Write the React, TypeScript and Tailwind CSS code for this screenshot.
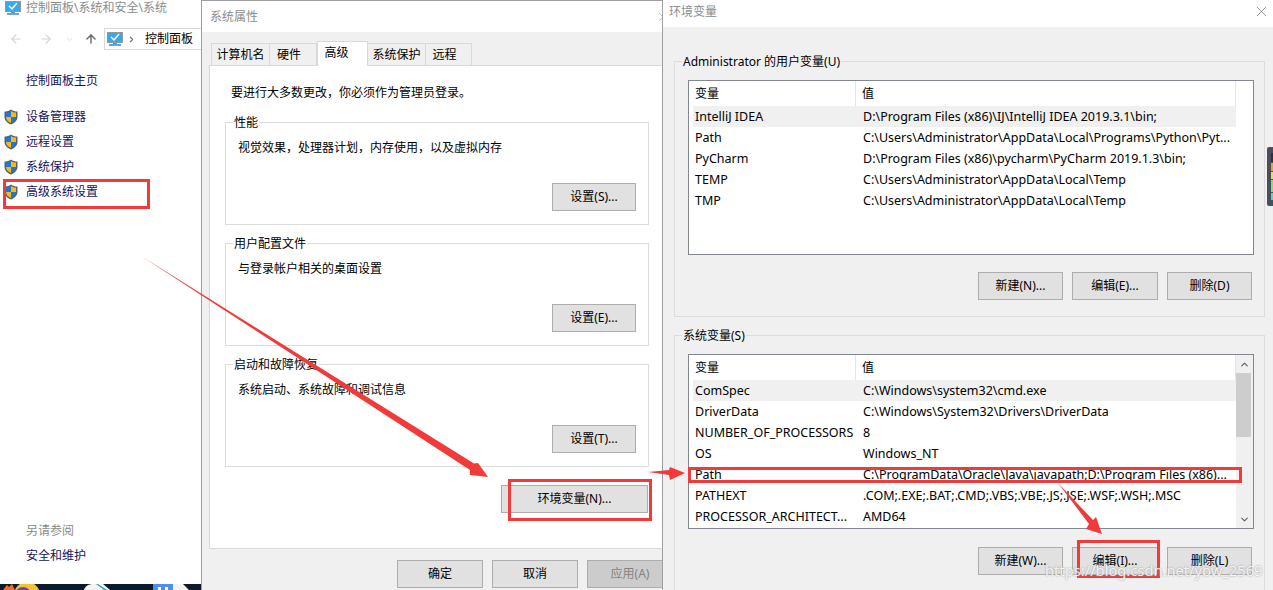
import React from 'react';
import { ArrowLeft, ArrowRight, ArrowUp, ChevronDown, ChevronRight, ChevronUp, X } from 'lucide-react';

const uiFont = 'font-["Noto_Sans","Noto_Sans_CJK_SC",sans-serif]';

type EnvRow = { name: string; value: string };

const userVars: EnvRow[] = [
  { name: 'IntelliJ IDEA', value: 'D:\\Program Files (x86)\\IJ\\IntelliJ IDEA 2019.3.1\\bin;' },
  { name: 'Path', value: 'C:\\Users\\Administrator\\AppData\\Local\\Programs\\Python\\Pyt...' },
  { name: 'PyCharm', value: 'D:\\Program Files (x86)\\pycharm\\PyCharm 2019.1.3\\bin;' },
  { name: 'TEMP', value: 'C:\\Users\\Administrator\\AppData\\Local\\Temp' },
  { name: 'TMP', value: 'C:\\Users\\Administrator\\AppData\\Local\\Temp' },
];

const systemVars: EnvRow[] = [
  { name: 'ComSpec', value: 'C:\\Windows\\system32\\cmd.exe' },
  { name: 'DriverData', value: 'C:\\Windows\\System32\\Drivers\\DriverData' },
  { name: 'NUMBER_OF_PROCESSORS', value: '8' },
  { name: 'OS', value: 'Windows_NT' },
  { name: 'Path', value: 'C:\\ProgramData\\Oracle\\Java\\javapath;D:\\Program Files (x86)...' },
  { name: 'PATHEXT', value: '.COM;.EXE;.BAT;.CMD;.VBS;.VBE;.JS;.JSE;.WSF;.WSH;.MSC' },
  { name: 'PROCESSOR_ARCHITECT...', value: 'AMD64' },
];

const navLinks = ['设备管理器', '远程设置', '系统保护', '高级系统设置'];

const MonitorIcon: React.FC = () => (
  <svg width="16" height="14" viewBox="0 0 16 14" className="shrink-0">
    <rect x="0.5" y="0.5" width="15" height="10" fill="#3aa7e8" stroke="#8a9aa8" />
    <path d="M4 5l3 3 5-6" fill="none" stroke="#ffffff" strokeWidth="1.5" />
    <rect x="6" y="11" width="4" height="1" fill="#7b8a96" />
    <rect x="2" y="12" width="12" height="2" fill="#5fa8d8" />
  </svg>
);

const ShieldIcon: React.FC = () => (
  <svg width="14" height="16" viewBox="0 0 14 16" className="shrink-0">
    <path d="M7 0.5C5 2 3 2.6 0.5 2.6V8c0 3.6 3 6 6.5 7.5 3.5-1.5 6.5-3.9 6.5-7.5V2.6C11 2.6 9 2 7 0.5z" fill="#5a6068" />
    <path d="M7 2v6H2V3.6C3.8 3.5 5.5 3 7 2z" fill="#1f78d1" />
    <path d="M7 2c1.5 1 3.2 1.5 5 1.6V8H7z" fill="#f6b91c" />
    <path d="M2 8h5v6C4.400 12.800 2 11 2 8z" fill="#f6b91c" />
    <path d="M7 8h5c0 3-2.400 4.800-5 6z" fill="#1f78d1" />
  </svg>
);

const TaskbarIcons: React.FC = () => (
  <svg width="201" height="6" viewBox="0 0 201 6" className="block">
    <path d="M3 6L7 1l2 2 3-3 3 6z" fill="#f0701c" />
    <circle cx="27" cy="11" r="13" fill="#f4c430" />
    <circle cx="23" cy="11" r="8" fill="#7b3fb5" />
    <path d="M84 6c1-4 5-6 9-6h10l7 6z" fill="#f4f4f4" />
    <path d="M98 0l9 6h-3l-8-6z" fill="#2fa89a" />
    <rect x="153" y="0" width="20" height="6" fill="#4d8ef0" />
    <rect x="158" y="3" width="3" height="3" fill="#ffffff" />
    <rect x="165" y="3" width="3" height="3" fill="#ffffff" />
    <path d="M173 0h10l6 6h-16z" fill="#f2f2f2" />
  </svg>
);

const WinButton: React.FC<{ label: string; className: string; disabled?: boolean }> = ({ label, className, disabled }) => (
  <div
    className={`flex h-[28px] items-center justify-center border border-[#adadad] ${
      disabled ? 'bg-[#cccccc] text-[#838383]' : 'bg-[#e1e1e1] text-black'
    } ${className}`}
  >
    {label}
  </div>
);

const SettingsGroup: React.FC<{ title: string; desc: string; action: string }> = ({ title, desc, action }) => (
  <div className="relative h-[103px] w-[424px] border border-[#dcdcdc]">
    <span className="absolute left-[7px] top-[-8px] bg-white px-px leading-[16px]">{title}</span>
    <p className="pl-[12px] pt-[17px] leading-[16px]">{desc}</p>
    <WinButton label={action} className="absolute left-[326px] top-[60px] w-[84px]" />
  </div>
);

const EnvList: React.FC<{ rows: EnvRow[]; hovered: number; scrollbar?: boolean }> = ({ rows, hovered, scrollbar }) => (
  <div className="ml-[13px] mt-[18px] flex h-[175px] w-[566px] overflow-hidden border border-[#828790] bg-white">
    <div className="ml-[4px] w-[543px] shrink-0">
      <div className="flex h-[25px] items-center border-r border-[#e5e5e5]">
        <span className="w-[163px] border-r border-[#e5e5e5] pl-[2px] leading-[25px]">变量</span>
        <span className="pl-[6px]">值</span>
      </div>
      {rows.map((row, idx) => (
        <div key={row.name + idx} className={`flex h-[21px] items-center pt-[2px] text-[12.5px] ${idx === hovered ? 'bg-[#f0f0f0]' : ''}`}>
          <span className="w-[170px] shrink-0 whitespace-nowrap pl-[2px]">{row.name}</span>
          <span className="whitespace-nowrap">{row.value}</span>
        </div>
      ))}
    </div>
    {scrollbar && (
      <div className="flex w-[17px] flex-col bg-[#f0f0f0]">
        <div className="flex h-[18px] items-center justify-center">
          <ChevronUp size={11} strokeWidth={2.5} color="#606060" />
        </div>
        <div className="h-[64px] w-[15px] bg-[#cdcdcd]" />
        <div className="mt-auto flex h-[18px] items-center justify-center">
          <ChevronDown size={11} strokeWidth={2.5} color="#606060" />
        </div>
      </div>
    )}
  </div>
);

const EnvActions: React.FC<{ labels: string[]; className: string }> = ({ labels, className }) => (
  <div className={`flex justify-end gap-[9px] pr-[12px] ${className}`}>
    <WinButton label={labels[0]} className="w-[85px]" />
    <WinButton label={labels[1]} className="w-[86px]" />
    <WinButton label={labels[2]} className="w-[85px]" />
  </div>
);

const App: React.FC = () => {
  return (
    <div className={`relative flex h-[590px] w-[1273px] overflow-hidden bg-white text-[12px] text-black ${uiFont}`}>
      {/* control panel */}
      <aside className="flex h-full w-[201px] shrink-0 flex-col overflow-hidden text-[#14145a]">
        <div className="flex h-[16px] items-center gap-[5px] pl-[5px] text-[#8c8c8c]">
          <MonitorIcon />
          <span className="whitespace-nowrap">控制面板\系统和安全\系统</span>
        </div>
        <div className="mt-[12px] flex h-[22px] items-center">
          <ArrowLeft size={14} color="#d4d4d4" className="ml-[9px]" />
          <ArrowRight size={14} color="#d4d4d4" className="ml-[16px]" />
          <ChevronDown size={9} color="#d4d4d4" className="ml-[12px]" />
          <ArrowUp size={14} strokeWidth={2.5} color="#6b6b6b" className="ml-[10px]" />
          <div className="ml-[6px] flex h-[22px] flex-1 items-center border border-r-0 border-[#d9d9d9] pl-[2px] text-black">
            <MonitorIcon />
            <ChevronRight size={9} strokeWidth={3} color="#707070" className="ml-[4px]" />
            <span className="ml-[9px] whitespace-nowrap">控制面板</span>
          </div>
        </div>
        <div className="mt-[21px] h-[20px] pl-[26px] leading-[20px]">控制面板主页</div>
        <ul className="mt-[13px]">
          {navLinks.map((link) => (
            <li key={link} className="flex h-[25px] items-center gap-[8px] pl-[4px]">
              <ShieldIcon />
              {link}
            </li>
          ))}
        </ul>
        <div className="mt-auto h-[25px] pl-[26px] leading-[25px] text-[#8a8a8a]">另请参阅</div>
        <div className="h-[25px] pl-[26px] leading-[25px]">安全和维护</div>
        <div className="mt-[16px] h-[6px] bg-[#0c1a2e]">
          <TaskbarIcons />
        </div>
      </aside>

      {/* system properties */}
      <section className="flex h-full w-[461px] shrink-0 flex-col overflow-hidden border-l border-t border-[#a0a0a0]">
        <div className="flex h-[31px] shrink-0 items-center justify-between pl-[8px] text-[#8c8c8c]">
          <span>系统属性</span>
          <X size={14} strokeWidth={1} color="#8c8c8c" className="mr-[-8px]" />
        </div>
        <div className="flex flex-1 flex-col bg-[#f0f0f0] pl-[7px] pt-[9px]">
          <div className="flex h-[24px] items-end pl-[2px]">
            <div className="flex h-[22px] w-[59px] items-center justify-center border border-b-0 border-[#d9d9d9]">计算机名</div>
            <div className="flex h-[22px] w-[47px] items-center justify-center border border-b-0 border-l-0 border-[#d9d9d9] pr-[8px]">硬件</div>
            <div className="relative top-px z-10 flex h-[25px] w-[51px] items-center justify-center border border-b-0 border-[#d9d9d9] bg-white pb-[2px] pr-[12px]">高级</div>
            <div className="flex h-[22px] w-[58px] items-center justify-center border border-b-0 border-l-0 border-[#d9d9d9]">系统保护</div>
            <div className="flex h-[22px] w-[46px] items-center justify-center border border-b-0 border-l-0 border-[#d9d9d9] pr-[8px]">远程</div>
          </div>
          <div className="h-[484px] w-[470px] shrink-0 border border-[#d9d9d9] bg-white pl-[15px]">
            <p className="pl-[6px] pt-[19px] leading-[16px]">要进行大多数更改，你必须作为管理员登录。</p>
            <div className="mt-[21px] flex flex-col gap-[18px]">
              <SettingsGroup title="性能" desc="视觉效果，处理器计划，内存使用，以及虚拟内存" action="设置(S)..." />
              <SettingsGroup title="用户配置文件" desc="与登录帐户相关的桌面设置" action="设置(E)..." />
              <SettingsGroup title="启动和故障恢复" desc="系统启动、系统故障和调试信息" action="设置(T)..." />
            </div>
            <WinButton label="环境变量(N)..." className="ml-[276px] mt-[18px] w-[147px]" />
          </div>
          <div className="mt-[11px] flex gap-[9px] pl-[188px]">
            <WinButton label="确定" className="w-[86px] shrink-0" />
            <WinButton label="取消" className="w-[86px] shrink-0" />
            <WinButton label="应用(A)" disabled className="w-[86px] shrink-0" />
          </div>
        </div>
      </section>

      {/* environment variables */}
      <section className="relative z-10 flex h-full flex-1 flex-col border-l border-[#a0a0a0]">
        <div className="flex h-[27px] shrink-0 items-center justify-between pb-[4px] pl-[6px] pr-[3px] text-[#8c8c8c]">
          <span>环境变量</span>
          <X size={17} strokeWidth={1} color="#6f6f6f" />
        </div>
        <div className="flex-1 overflow-hidden bg-[#f0f0f0] pl-[11px] pt-[34px]">
          <div className="relative h-[256px] w-[591px] border border-[#dcdcdc]">
            <span className="absolute left-[7px] top-[-8px] bg-[#f0f0f0] px-px leading-[16px]">Administrator 的用户变量(U)</span>
            <EnvList rows={userVars} hovered={0} />
            <EnvActions labels={['新建(N)...', '编辑(E)...', '删除(D)']} className="mt-[17px]" />
          </div>
          <div className="relative mt-[18px] h-[300px] w-[591px] border border-[#dcdcdc]">
            <span className="absolute left-[7px] top-[-8px] bg-[#f0f0f0] px-px leading-[16px]">系统变量(S)</span>
            <EnvList rows={systemVars} hovered={0} scrollbar />
            <EnvActions labels={['新建(W)...', '编辑(I)...', '删除(L)']} className="mt-[18px]" />
          </div>
        </div>
      </section>

      {/* desktop widget peeking in at the right edge */}
      <div className="absolute right-0 top-[147px] z-20 flex h-[59px] w-[6px] flex-col gap-px rounded-l-[2px] bg-[#4a4f5c] py-[6px] pl-[4px]">
        <div className="h-[10px] bg-[#2c3040]" />
        <div className="h-[8px] bg-[#f0a030]" />
        <div className="h-[8px] bg-[#e6e050]" />
        <div className="h-[12px] bg-[#80e070]" />
        <div className="h-[8px] bg-[#40e0c0]" />
      </div>

      {/* red annotations */}
      <div className="absolute left-[3px] top-[179px] z-30 h-[30px] w-[147px] border-[3px] border-[#f33a3a]" />
      <div className="absolute left-[508px] top-[479px] z-30 h-[42px] w-[144px] border-[3px] border-[#f33a3a]" />
      <div className="absolute left-[688px] top-[467px] z-30 h-[16px] w-[554px] border-[3px] border-[#f33a3a]" />
      <div className="absolute left-[1077px] top-[540px] z-30 h-[38px] w-[83px] border-[3px] border-[#f33a3a]" />
      <svg width="1273" height="590" viewBox="0 0 1273 590" className="pointer-events-none absolute left-0 top-0 z-30">
        <polygon points="141,256 474,463.500 478,463 488,477 470,475 470,470" fill="#f33a3a" />
        <polygon points="648,472 669,470 670,467 685,473 670,480 669,475" fill="#f33a3a" />
        <polygon points="1058,483 1093,520 1096,517 1102,534 1086,529 1089,524" fill="#f33a3a" />
      </svg>

      <span className="absolute left-[1045px] top-[560px] z-40 whitespace-nowrap text-[14.7px] leading-[20px] text-white/85 [text-shadow:0_0_2px_#8a8a8a]">
        https://blog.csdn.net/ybw_2569
      </span>
    </div>
  );
};

export default App;
